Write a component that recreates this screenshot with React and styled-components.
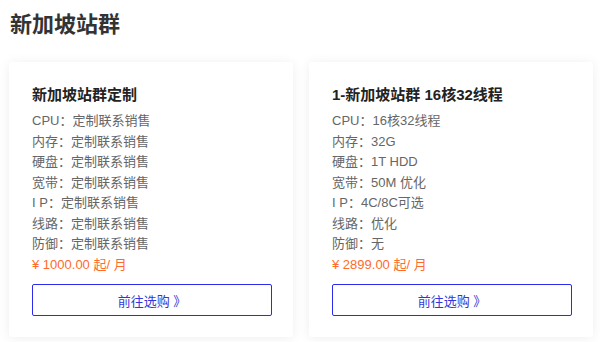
import React from 'react'
import styled, { createGlobalStyle } from 'styled-components';

const plans = [
  {
    title: '新加坡站群定制',
    specs: [
      ['CPU', '定制联系销售'],
      ['内存', '定制联系销售'],
      ['硬盘', '定制联系销售'],
      ['宽带', '定制联系销售'],
      ['I P', '定制联系销售'],
      ['线路', '定制联系销售'],
      ['防御', '定制联系销售'],
    ],
    price: '1000.00',
  },
  {
    title: '1-新加坡站群 16核32线程',
    specs: [
      ['CPU', '16核32线程'],
      ['内存', '32G'],
      ['硬盘', '1T HDD'],
      ['宽带', '50M 优化'],
      ['I P', '4C/8C可选'],
      ['线路', '优化'],
      ['防御', '无'],
    ],
    price: '2899.00',
  },
];

const App = () => {
  return (
    <>
      <Global />
      <Page>
        <Heading>新加坡站群</Heading>
        <Grid>
          {plans.map((p) => (
            <Card key={p.title}>
              <CardTitle>{p.title}</CardTitle>
              <Specs>
                {p.specs.map(([k, v]) => (
                  <Spec key={k}>{k}：{v}</Spec>
                ))}
              </Specs>
              <Price>¥ {p.price} 起/ 月</Price>
              <BuyButton>前往选购 》</BuyButton>
            </Card>
          ))}
        </Grid>
      </Page>
    </>
  )
}

const Global = createGlobalStyle`
  body {
    margin: 0;
    background: #fff;
    font-family: "Liberation Sans", "Noto Sans CJK SC", sans-serif;
  }
`;

const Page = styled.div`
  width: 600px;
  height: 342px;
  box-sizing: border-box;
  padding: 10px 7px 0 9px;
  overflow: hidden;
`;

const Heading = styled.h2`
  margin: 0;
  font-size: 22px;
  line-height: 30px;
  font-weight: 700;
  color: #333;
  padding-left: 1px;
`;

const Grid = styled.div`
  display: grid;
  grid-template-columns: 284px 284px;
  gap: 16px;
  margin-top: 22px;
`;

const Card = styled.div`
  background: #fff;
  box-shadow: 0 1px 12px rgba(0, 0, 0, 0.07);
  border-radius: 3px;
  padding: 22px 22px 21px 23px;
  display: flex;
  flex-direction: column;
`;

const CardTitle = styled.div`
  font-size: 15px;
  line-height: 22px;
  font-weight: 700;
  color: #222;
  margin-bottom: 5px;
`;

const Specs = styled.div`
  display: flex;
  flex-direction: column;
`;

const Spec = styled.div`
  font-size: 13px;
  line-height: 20.5px;
  color: #666;
  white-space: nowrap;
`;

const Price = styled.div`
  font-size: 13px;
  line-height: 20.5px;
  color: #ff6a2b;
`;

const BuyButton = styled.button`
  margin-top: 9px;
  width: 240px;
  height: 32px;
  background: #fff;
  border: 1px solid #2b2bf0;
  border-radius: 2px;
  color: #3636d8;
  font-family: inherit;
  font-size: 13px;
  cursor: pointer;
  padding: 0;
`;

export default App
